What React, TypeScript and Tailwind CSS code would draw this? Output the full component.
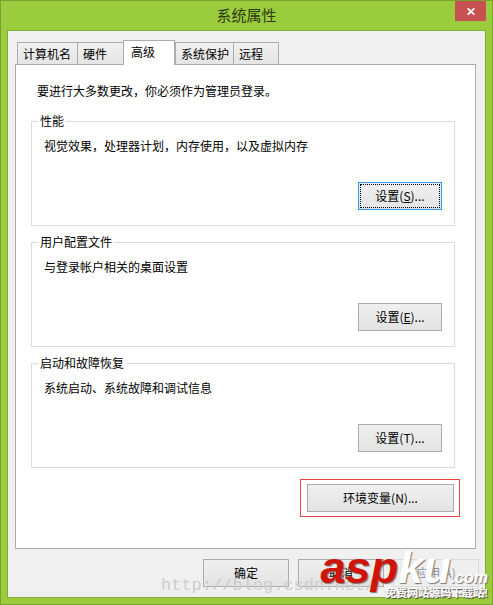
import type { ReactNode } from 'react'

const tabs = [
  { label: '计算机名', width: 'w-[61px]' },
  { label: '硬件', width: 'w-[47px]' },
  { label: '高级', width: 'w-[52px]', active: true },
  { label: '系统保护', width: 'w-[59px]' },
  { label: '远程', width: 'w-[46px]' },
]

const groups = [
  { title: '性能', text: '视觉效果，处理器计划，内存使用，以及虚拟内存', hotkey: 'S', underline: true, focused: true },
  { title: '用户配置文件', text: '与登录帐户相关的桌面设置', hotkey: 'E', underline: true },
  { title: '启动和故障恢复', text: '系统启动、系统故障和调试信息', hotkey: 'T' },
]

type DialogButtonProps = {
  children: ReactNode
  width: string
  focused?: boolean
  disabled?: boolean
}

const DialogButton = ({ children, width, focused, disabled }: DialogButtonProps) => {
  const border = focused ? 'border-[#3399ff]' : disabled ? 'border-[#d9d9d9]' : 'border-[#acacac]'
  const tone = disabled ? 'bg-[#efefef] text-[#8a8f9c]' : 'bg-linear-to-b from-[#f0f0f0] to-[#e3e3e3]'

  return (
    <button type="button" disabled={disabled} className={`flex h-7 shrink-0 border p-px ${width} ${border} ${tone}`}>
      <span
        className={`flex h-full w-full items-center justify-center border whitespace-nowrap ${
          focused ? 'border-dotted border-black' : 'border-transparent'
        }`}
      >
        {children}
      </span>
    </button>
  )
}

const TitleBar = () => (
  <header className="flex h-[29px] items-start">
    <span className="w-[31px]" />
    <h1 className="flex-1 text-center text-[15px] leading-7 text-[#2c3a10]">系统属性</h1>
    <button type="button" aria-label="关闭" className="flex h-5 w-[31px] items-center justify-center bg-[#c75050]">
      <svg width="8" height="7" viewBox="0 0 8 7" fill="none" stroke="#fff" strokeWidth="1.7">
        <path d="M0.7 0.3 7.3 6.7M7.3 0.3 0.7 6.7" />
      </svg>
    </button>
  </header>
)

const SiteLogo = () => (
  <div className="absolute right-1 bottom-[3px] font-['Liberation_Sans','Noto_Sans_CJK_SC',sans-serif] font-bold whitespace-nowrap text-white">
    <div className="flex items-baseline italic [text-shadow:1px_1px_1px_#777]">
      <span className="text-[45px] leading-[42px] text-[#d0140a]">asp</span>
      <span className="text-[45px] leading-[42px]">ku</span>
      <span className="text-[16px] leading-4">.com</span>
    </div>
    <div className="-mt-1 text-right text-[11px] leading-4 [text-shadow:1px_1px_1px_#444]">免费网站源码下载站!</div>
  </div>
)

export default function App() {
  return (
    <div className="relative flex flex-col overflow-hidden border border-[#7ba130] bg-[#9bcc3d] px-1.5 pb-1.5 font-['Noto_Sans_CJK_SC',sans-serif] text-[12px] leading-4 text-black">
      <TitleBar />
      <main className="border border-[#84ac35] bg-[#f0f0f0] pt-[9px] pr-1.5 pb-2.5 pl-[7px]">
        <div role="tablist" className="flex items-end px-0.5">
          {tabs.map((tab) => (
            <button
              key={tab.label}
              type="button"
              role="tab"
              aria-selected={Boolean(tab.active)}
              className={`flex justify-start border border-b-0 border-[#acacac] pl-[5px] whitespace-nowrap ${tab.width} ${
                tab.active
                  ? 'relative -mb-px h-[25px] bg-white pt-[3px] pl-[7px]'
                  : '-mr-px h-[22px] bg-linear-to-b from-[#f0f0f0] to-[#e5e5e5] pt-[3px]'
              }`}
            >
              {tab.label}
            </button>
          ))}
        </div>

        <section
          role="tabpanel"
          className="mr-[3px] border border-[#acacac] bg-white pt-[18px] pr-[15px] pb-[31px] pl-[15px]"
        >
          <p className="px-1.5">要进行大多数更改，你必须作为管理员登录。</p>
          <div className="mt-3.5 flex flex-col gap-2 pr-[5px]">
            {groups.map((group) => (
              <fieldset key={group.title} className="border border-[#dcdcdc] px-3 pb-[15px]">
                <legend className="-ml-1.5 px-0.5">{group.title}</legend>
                <p className="mt-[9px]">{group.text}</p>
                <div className="mt-7 flex justify-end">
                  <DialogButton width="w-[84px]" focused={group.focused}>
                    设置({group.underline ? <u>{group.hotkey}</u> : group.hotkey})...
                  </DialogButton>
                </div>
              </fieldset>
            ))}
          </div>
          <div className="mt-[11px] ml-auto w-[160px] border border-[#f04040] py-1 pl-1.5">
            <DialogButton width="w-[147px]">环境变量(N)...</DialogButton>
          </div>
        </section>

        <footer className="mt-2.5 flex justify-end gap-[9px]">
          <DialogButton width="w-[86px]">确定</DialogButton>
          <DialogButton width="w-[86px]">取消</DialogButton>
          <DialogButton width="w-[86px]" disabled>
            应用(A)
          </DialogButton>
        </footer>
      </main>

      <span className="absolute bottom-2 left-40 font-['Liberation_Mono',monospace] text-[17px] leading-5 text-[#cdcdcb]">
        http://blog.csdn.net/
      </span>
      <SiteLogo />
    </div>
  )
}
